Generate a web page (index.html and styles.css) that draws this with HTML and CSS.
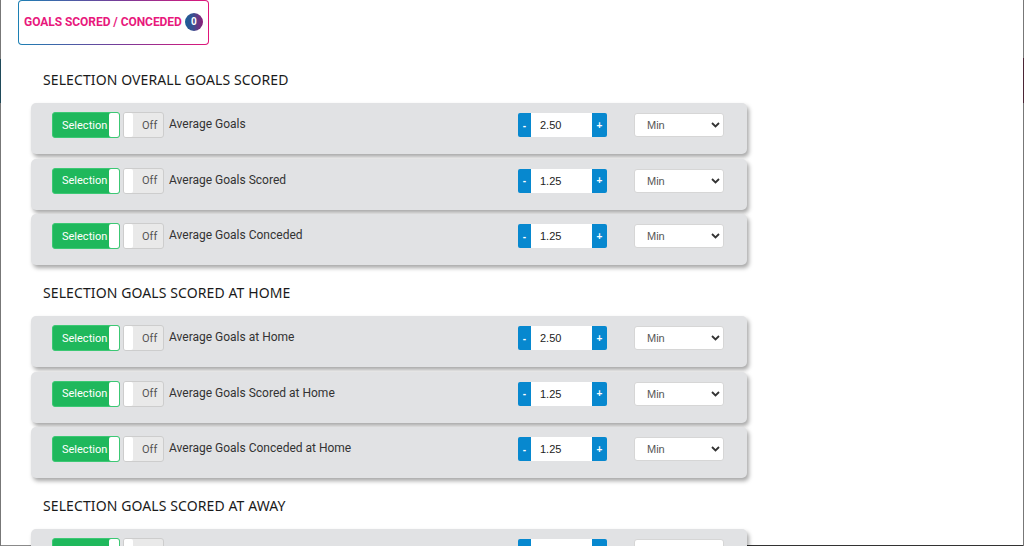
FILE: index.html
```html
<!DOCTYPE html>
<html>
<head>
<meta charset="utf-8">
<link rel="stylesheet" href="styles.css">
</head>
<body>
<div class="page">
  <div class="tab">
    <span class="tab-label">GOALS SCORED / CONCEDED</span>
    <span class="badge">0</span>
  </div>
  <div class="content">
    <section class="section">
      <h2 class="section-title">SELECTION OVERALL GOALS SCORED</h2>
      <div class="rows">
        <div class="card">
          <div class="toggle"><span class="toggle-on">Selection<i class="knob"></i></span><span class="toggle-off"><i class="knob-off"></i>Off</span></div>
          <span class="label">Average Goals</span>
          <div class="stepper"><button class="step">-</button><span class="value">2.50</span><button class="step">+</button></div>
          <div class="select"><span>Min</span><svg class="chev" width="9" height="6" viewBox="0 0 9 6"><path d="M1 1l3.5 3.5L8 1" fill="none" stroke="#333" stroke-width="1.8"/></svg></div>
        </div>
        <div class="card">
          <div class="toggle"><span class="toggle-on">Selection<i class="knob"></i></span><span class="toggle-off"><i class="knob-off"></i>Off</span></div>
          <span class="label">Average Goals Scored</span>
          <div class="stepper"><button class="step">-</button><span class="value">1.25</span><button class="step">+</button></div>
          <div class="select"><span>Min</span><svg class="chev" width="9" height="6" viewBox="0 0 9 6"><path d="M1 1l3.5 3.5L8 1" fill="none" stroke="#333" stroke-width="1.8"/></svg></div>
        </div>
        <div class="card">
          <div class="toggle"><span class="toggle-on">Selection<i class="knob"></i></span><span class="toggle-off"><i class="knob-off"></i>Off</span></div>
          <span class="label">Average Goals Conceded</span>
          <div class="stepper"><button class="step">-</button><span class="value">1.25</span><button class="step">+</button></div>
          <div class="select"><span>Min</span><svg class="chev" width="9" height="6" viewBox="0 0 9 6"><path d="M1 1l3.5 3.5L8 1" fill="none" stroke="#333" stroke-width="1.8"/></svg></div>
        </div>
      </div>
    </section>
    <section class="section">
      <h2 class="section-title">SELECTION GOALS SCORED AT HOME</h2>
      <div class="rows">
        <div class="card">
          <div class="toggle"><span class="toggle-on">Selection<i class="knob"></i></span><span class="toggle-off"><i class="knob-off"></i>Off</span></div>
          <span class="label">Average Goals at Home</span>
          <div class="stepper"><button class="step">-</button><span class="value">2.50</span><button class="step">+</button></div>
          <div class="select"><span>Min</span><svg class="chev" width="9" height="6" viewBox="0 0 9 6"><path d="M1 1l3.5 3.5L8 1" fill="none" stroke="#333" stroke-width="1.8"/></svg></div>
        </div>
        <div class="card">
          <div class="toggle"><span class="toggle-on">Selection<i class="knob"></i></span><span class="toggle-off"><i class="knob-off"></i>Off</span></div>
          <span class="label">Average Goals Scored at Home</span>
          <div class="stepper"><button class="step">-</button><span class="value">1.25</span><button class="step">+</button></div>
          <div class="select"><span>Min</span><svg class="chev" width="9" height="6" viewBox="0 0 9 6"><path d="M1 1l3.5 3.5L8 1" fill="none" stroke="#333" stroke-width="1.8"/></svg></div>
        </div>
        <div class="card">
          <div class="toggle"><span class="toggle-on">Selection<i class="knob"></i></span><span class="toggle-off"><i class="knob-off"></i>Off</span></div>
          <span class="label">Average Goals Conceded at Home</span>
          <div class="stepper"><button class="step">-</button><span class="value">1.25</span><button class="step">+</button></div>
          <div class="select"><span>Min</span><svg class="chev" width="9" height="6" viewBox="0 0 9 6"><path d="M1 1l3.5 3.5L8 1" fill="none" stroke="#333" stroke-width="1.8"/></svg></div>
        </div>
      </div>
    </section>
    <section class="section">
      <h2 class="section-title">SELECTION GOALS SCORED AT AWAY</h2>
      <div class="rows">
        <div class="card">
          <div class="toggle"><span class="toggle-on"><i class="knob"></i></span><span class="toggle-off"><i class="knob-off"></i></span></div>
          <span class="label"></span>
          <div class="stepper"><button class="step"></button><span class="value"></span><button class="step"></button></div>
          <div class="select"></div>
        </div>
      </div>
    </section>
  </div>
</div>
</body>
</html>
```
FILE: styles.css
```css
* { box-sizing: border-box; }
html, body { margin: 0; padding: 0; background: #fff; }
.page {
  width: 1024px;
  height: 546px;
  overflow: hidden;
  background:
    linear-gradient(to bottom, #777 0 59px, #1f4a5a 59px 103px, #777 103px) left top / 1px 100% no-repeat,
    linear-gradient(to bottom, #777 0 58px, #4a2535 58px 103px, #777 103px) right top / 1px 100% no-repeat,
    linear-gradient(90deg, #8a8a8a 0 230px, #333 230px) left bottom / 100% 1px no-repeat,
    #fff;
}
.tab {
  margin-left: 18px;
  width: 191px;
  height: 45px;
  border: 1.5px solid transparent;
  border-radius: 4px;
  background:
    linear-gradient(#fff, #fff) padding-box,
    linear-gradient(90deg, #1c80b4, #7a3a98 55%, #e0157a) border-box;
  display: flex;
  align-items: center;
  padding: 0 0 2px 5px;
  gap: 3px;
}
.tab-label {
  font-family: Roboto, "Liberation Sans", sans-serif;
  font-weight: 700;
  font-size: 12px;
  color: #e8187c;
  letter-spacing: -0.05px;
}
.badge {
  width: 18px;
  height: 18px;
  border-radius: 50%;
  background: linear-gradient(90deg, #1a5f98, #3a4f90 45%, #8e1f78);
  color: #fff;
  font-family: Roboto, "Liberation Sans", sans-serif;
  font-weight: 700;
  font-size: 10px;
  display: flex;
  align-items: center;
  justify-content: center;
}
.content {
  padding: 11.5px 0 0 31px;
}
.section-title {
  margin: 13.5px 0 13px 12px;
  line-height: 20px;
  font-family: "Noto Sans", sans-serif;
  font-weight: 400;
  font-size: 14px;
  color: #1a1a1a;
  letter-spacing: 0.1px;
}
.rows {
  display: flex;
  flex-direction: column;
  gap: 4.5px;
  padding-bottom: 4.5px;
  width: 716px;
}
.card {
  height: 51px;
  background: #e1e2e4;
  border-radius: 5px;
  box-shadow: 2px 3px 4px rgba(0, 0, 0, 0.35);
  display: flex;
  align-items: flex-start;
  padding: 9px 23px 0 21px;
}
.toggle {
  display: flex;
  gap: 3px;
  height: 26px;
}
.toggle-on {
  width: 68px;
  height: 26px;
  background: #1fb85c;
  border: 1px solid #3cc874;
  border-radius: 3px;
  color: #fff;
  font-family: Roboto, "Liberation Sans", sans-serif;
  font-size: 11px;
  display: flex;
  align-items: center;
  padding-left: 9px;
  justify-content: space-between;
  padding-right: 0;
}
.knob {
  width: 10px;
  height: 24px;
  background: #fff;
  border-radius: 2px;
  margin-left: auto;
}
.toggle-off {
  width: 41px;
  height: 26px;
  background: #e9e9e9;
  border: 1px solid #cdcdcd;
  border-radius: 3px;
  color: #555;
  font-family: Roboto, "Liberation Sans", sans-serif;
  font-size: 11px;
  display: flex;
  align-items: center;
  gap: 9px;
}
.knob-off {
  width: 9px;
  height: 24px;
  background: #fff;
  border-radius: 2px;
}
.label {
  flex: 1;
  margin-left: 5px;
  line-height: 26px;
  margin-top: -1px;
  font-family: Roboto, "Liberation Sans", sans-serif;
  font-size: 12px;
  color: #333;
}
.stepper {
  display: flex;
  height: 24px;
  margin-top: 1px;
}
.step {
  width: 14px;
  height: 24px;
  border: 0;
  padding: 0;
  background: #0788cf;
  color: #fff;
  font-family: "Liberation Sans", sans-serif;
  font-size: 10px;
  font-weight: 700;
}
.step:first-child { border-radius: 2px 0 0 2px; width: 13px; }
.step:last-child { border-radius: 0 2px 2px 0; width: 15px; }
.value {
  width: 61px;
  background: #fff;
  font-family: "Liberation Sans", sans-serif;
  font-size: 11px;
  color: #222;
  line-height: 24px;
  padding-left: 9px;
}
.select {
  margin-left: 27px;
  margin-top: 1px;
  width: 90px;
  height: 24px;
  background: #fff;
  border: 1px solid #d6d6d6;
  border-radius: 3px;
  display: flex;
  align-items: center;
  justify-content: space-between;
  padding: 0 3px 0 12px;
  font-family: "Liberation Sans", sans-serif;
  font-size: 11px;
  color: #555;
}
.chev { display: block; }
```
